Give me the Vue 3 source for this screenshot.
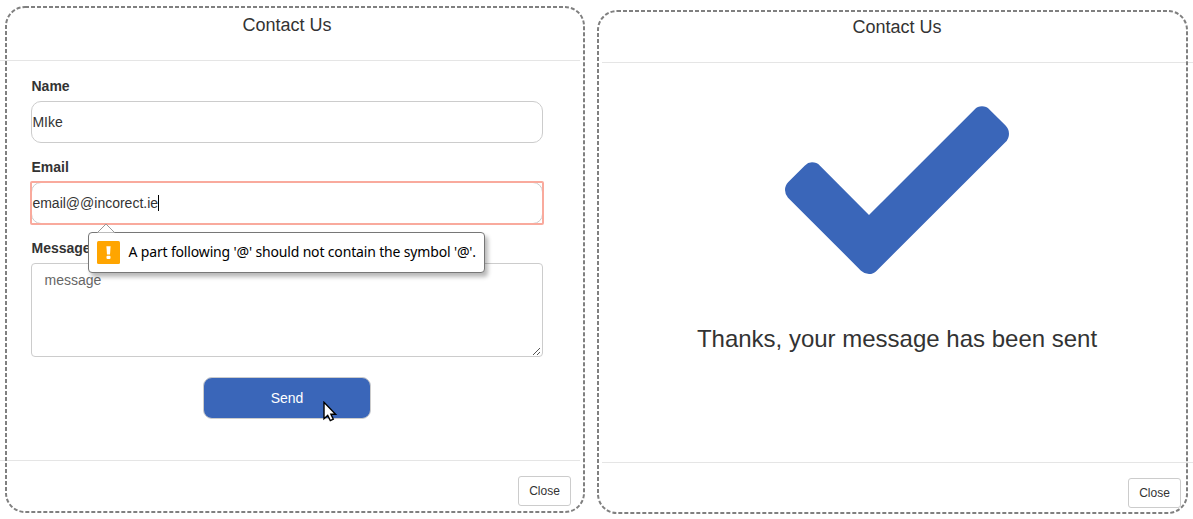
<script setup>
const title = 'Contact Us'
</script>

<template>
  <main class="stage">
    <section class="modal modal-form">
      <svg class="frame" width="580" height="507" viewBox="0 0 580 507">
        <rect x="1" y="1" width="578" height="505" rx="19" />
      </svg>
      <header class="head"><h4>{{ title }}</h4></header>
      <form class="body" @submit.prevent>
        <label>Name</label>
        <div class="field">MIke</div>
        <label>Email</label>
        <div class="field invalid">
          email@@incorect.ie<i class="caret"></i>
          <div class="tip">
            <svg class="arrow" width="18" height="10" viewBox="0 0 18 10">
              <path d="M0.5 9.5 L9 1 L17.5 9.5" />
            </svg>
            <svg class="warn" width="23" height="23" viewBox="0 0 23 23">
              <rect width="23" height="23" rx="1.5" fill="#ffa500" />
              <path d="M9.4 5.2h4.2l-.6 8.3h-3z" fill="#fff" />
              <rect x="9.5" y="14.7" width="4" height="3.3" rx="1" fill="#fff" />
            </svg>
            <span class="tip-text">A part following '@' should not contain the symbol '@'.</span>
          </div>
        </div>
        <label>Message</label>
        <div class="area">
          message
          <svg class="grip" width="9" height="9" viewBox="0 0 9 9">
            <path d="M1 8 L8 1 M5 8 L8 5" />
          </svg>
        </div>
        <button class="send" type="submit">
          Send
          <svg class="pointer" width="16" height="22" viewBox="0 0 16 22">
            <path d="M1 1.3 V17.8 L4.7 14.5 L7.3 19.6 L10.3 18.2 L7.9 13.3 H12.6 Z" />
          </svg>
        </button>
      </form>
      <footer class="foot"><button class="close" type="button">Close</button></footer>
    </section>

    <section class="modal modal-done">
      <svg class="frame" width="591" height="504" viewBox="0 0 591 504">
        <rect x="1" y="1" width="589" height="502" rx="19" />
      </svg>
      <header class="head"><h4>{{ title }}</h4></header>
      <div class="body done">
        <svg class="check" width="224" height="168" viewBox="45 47 672 504">
          <path d="M45 299Q45 285 55 275L104 226Q114 216 126 216Q140 216 150 226L297 374L613 58Q623 48 636 48Q649 48 659 58L706 105Q717 116 717 130Q717 145 706 156L320 541Q310 551 297 551Q284 551 273 541L54 322Q45 312 45 299Z" />
        </svg>
        <h3>Thanks, your message has been sent</h3>
      </div>
      <footer class="foot"><button class="close" type="button">Close</button></footer>
    </section>
  </main>
</template>

<style>
body { background: #fff; }
</style>

<style scoped>
* { box-sizing: border-box; }
.stage {
  display: grid;
  grid-template-columns: 580px 591px;
  column-gap: 22px;
  height: 519px;
  overflow: hidden;
  font: 14px/20px "Liberation Sans", Arial, sans-serif;
  color: #333;
}
.modal {
  position: relative;
  display: grid;
  grid-template-rows: 61px 399px 59px;
}
.modal-done { grid-template-rows: 63px 399px 57px; }
.frame { position: absolute; left: 5px; top: 6px; pointer-events: none; }
.modal-done .frame { left: -5px; top: 10px; }
.frame rect { fill: none; stroke: #808080; stroke-width: 2; stroke-dasharray: 4 2; }
.head { border-bottom: 1px solid #e5e5e5; padding: 13px 6px 0 0; text-align: center; }
.modal-done .head { padding: 15px 1px 0 0; }
h4, h3 { margin: 0; font-weight: 500; }
h4 { font-size: 18px; line-height: 25px; }
.body { display: flex; flex-direction: column; padding: 15px 37px 0 31px; }
label { font-weight: 700; height: 25px; padding-left: .5px; }
.field {
  position: relative;
  display: flex;
  align-items: center;
  flex: none;
  height: 42px;
  margin-bottom: 14px;
  padding-left: .4px;
  border: 1px solid #ccc;
  border-radius: 10px;
}
.invalid::before {
  content: "";
  position: absolute;
  inset: -2px;
  border: 2px solid #f9aa9d;
  border-radius: 2px;
}
.caret { width: 1px; height: 16px; margin-left: -.4px; background: #000; }
.tip {
  position: absolute;
  z-index: 2;
  left: 56px;
  top: 49px;
  display: flex;
  align-items: center;
  width: 397px;
  height: 41px;
  padding-left: 8px;
  gap: 8px;
  background: #fff;
  border: 1px solid #777;
  border-radius: 4px;
  box-shadow: 3px 4px 4px rgba(0, 0, 0, .28);
  color: #000;
}
.arrow { position: absolute; left: 8px; top: -10px; }
.arrow path { fill: #fff; stroke: #999; }
.warn { flex: none; }
.tip-text {
  padding: 0 0 1px .5px;
  font: 14px/20px "Noto Sans", sans-serif;
  letter-spacing: -.16px;
  white-space: nowrap;
}
.area {
  position: relative;
  height: 94px;
  flex: none;
  padding: 6px 12px 6px 12.5px;
  border: 1px solid #ccc;
  border-radius: 4px;
  color: #666;
}
.grip { position: absolute; right: 1px; bottom: 0; }
.grip path { stroke: #555; fill: none; }
.send {
  position: relative;
  width: 168px;
  height: 42px;
  flex: none;
  align-self: center;
  margin-top: 20px;
  padding: 0 0 1px;
  border: 1px solid #ccc;
  border-radius: 9px;
  background: #3a66b9;
  color: #fff;
  font: inherit;
}
.pointer { position: absolute; left: 119px; top: 23px; }
.pointer path { fill: #fff; stroke: #000; stroke-width: 1.4; }
.foot { border-top: 1px solid #e5e5e5; padding: 15px 9px 0 0; text-align: right; }
.modal-done .foot { padding-right: 12px; }
.close {
  width: 53px;
  height: 30px;
  padding: 0;
  border: 1px solid #ccc;
  border-radius: 3px;
  background: #fff;
  color: #333;
  font: 12px/18px "Liberation Sans", Arial, sans-serif;
}
.done { align-items: center; padding: 43px 1px 0 0; }
.check { flex: none; fill: #3a66b9; }
h3 { margin-top: 48px; font-size: 24px; line-height: 34px; white-space: nowrap; }
</style>
